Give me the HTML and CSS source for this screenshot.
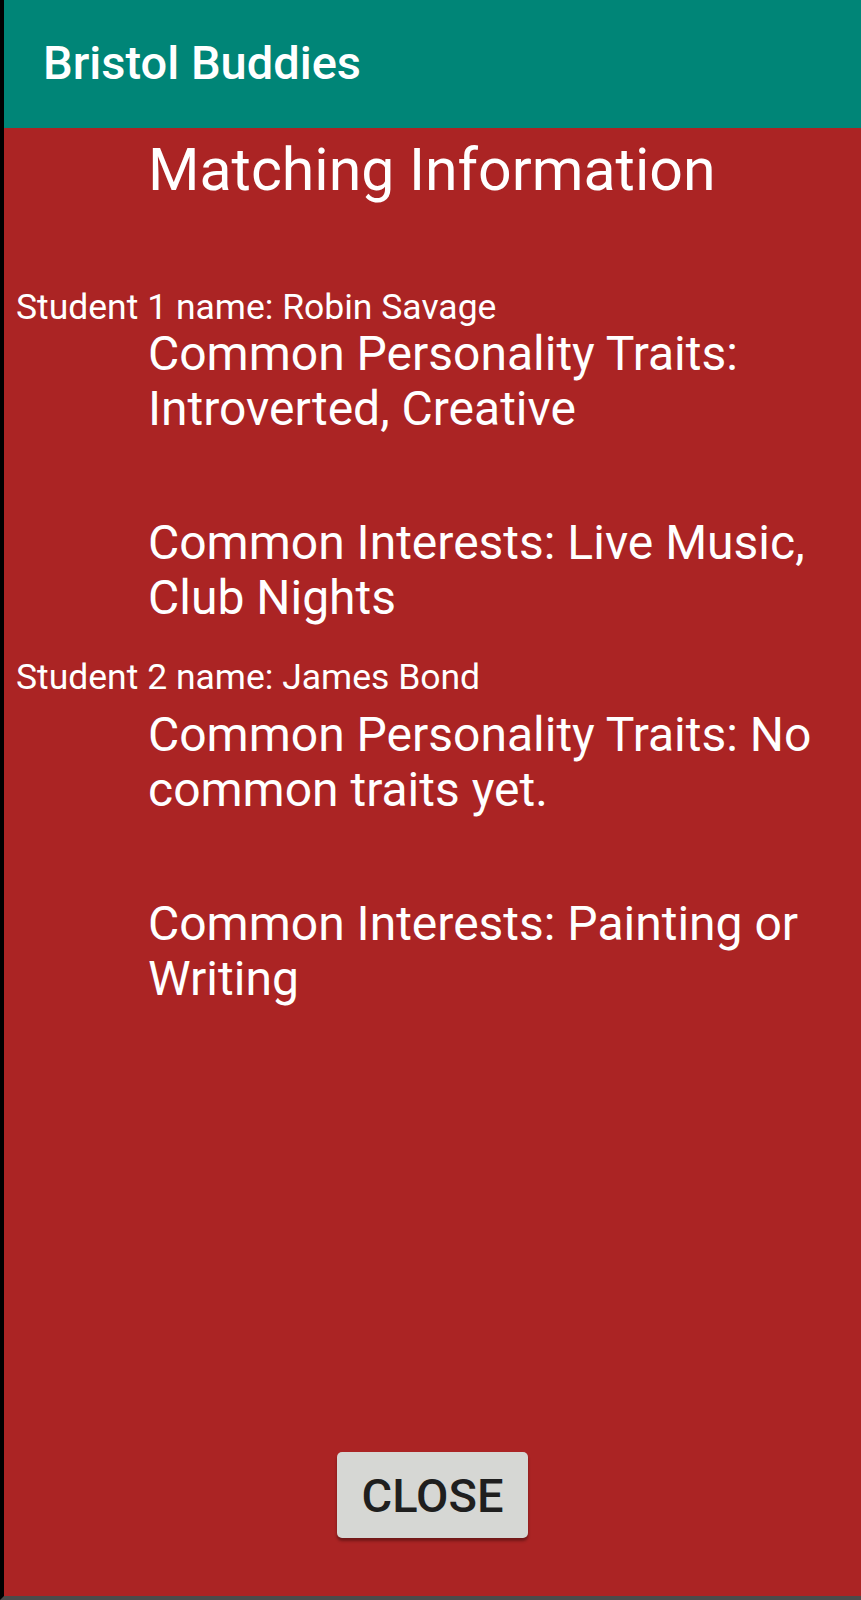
FILE: index.html
```html
<!DOCTYPE html>
<html>
<head>
<meta charset="utf-8">
<link rel="stylesheet" href="styles.css">
</head>
<body>
<div class="screen">
  <header class="appbar"><span class="appbar-title">Bristol Buddies</span></header>
  <main class="content">
    <h1 class="heading">Matching Information</h1>
    <div class="student">Student 1 name: Robin Savage</div>
    <p class="info">Common Personality Traits: Introverted, Creative</p>
    <p class="info info-gap">Common Interests: Live Music, Club Nights</p>
    <div class="student student-gap">Student 2 name: James Bond</div>
    <p class="info info-after-second">Common Personality Traits: No common traits yet.</p>
    <p class="info info-gap">Common Interests: Painting or Writing</p>
    <div class="actions"><button class="close-btn">CLOSE</button></div>
  </main>
</div>
</body>
</html>
```

FILE: styles.css
```css
html, body {
  margin: 0;
  padding: 0;
  background: #000;
}
.screen {
  width: 861px;
  height: 1600px;
  box-sizing: border-box;
  border-left: 4px solid #000;
  border-bottom: 4px solid #4b4b4b;
  display: flex;
  flex-direction: column;
  font-family: Roboto, "Noto Sans", sans-serif;
  color: #fff;
}
.appbar {
  height: 128px;
  flex: none;
  background: #008577;
  display: flex;
  align-items: center;
  padding-left: 39px;
  box-sizing: border-box;
}
.appbar-title {
  font-weight: 500;
  font-size: 47px;
  line-height: 55px;
  margin-top: -4px;
}
.content {
  flex: 1;
  background: #ab2424;
  display: flex;
  flex-direction: column;
}
.heading {
  margin: 7px 0 0 144px;
  font-weight: 400;
  font-size: 59px;
  line-height: 69px;
}
.student {
  margin: 84px 0 0 12px;
  font-size: 35.5px;
  line-height: 38px;
}
.student-gap {
  margin-top: 33px;
}
.info {
  margin: 0 0 0 144px;
  width: 680px;
  font-size: 48px;
  line-height: 55px;
}
.info-after-second {
  margin-top: 11px;
}
.info-gap {
  margin-top: 79px;
}
.actions {
  margin-top: auto;
  margin-bottom: 58px;
  display: flex;
  justify-content: center;
}
.close-btn {
  width: 191px;
  height: 86px;
  border: none;
  border-radius: 5px;
  background: #d6d7d4;
  box-shadow: 0 3px 3px rgba(0, 0, 0, 0.35);
  font-family: Roboto, "Noto Sans", sans-serif;
  font-weight: 500;
  font-size: 47px;
  color: #1f1f1f;
  padding: 0;
}
```
